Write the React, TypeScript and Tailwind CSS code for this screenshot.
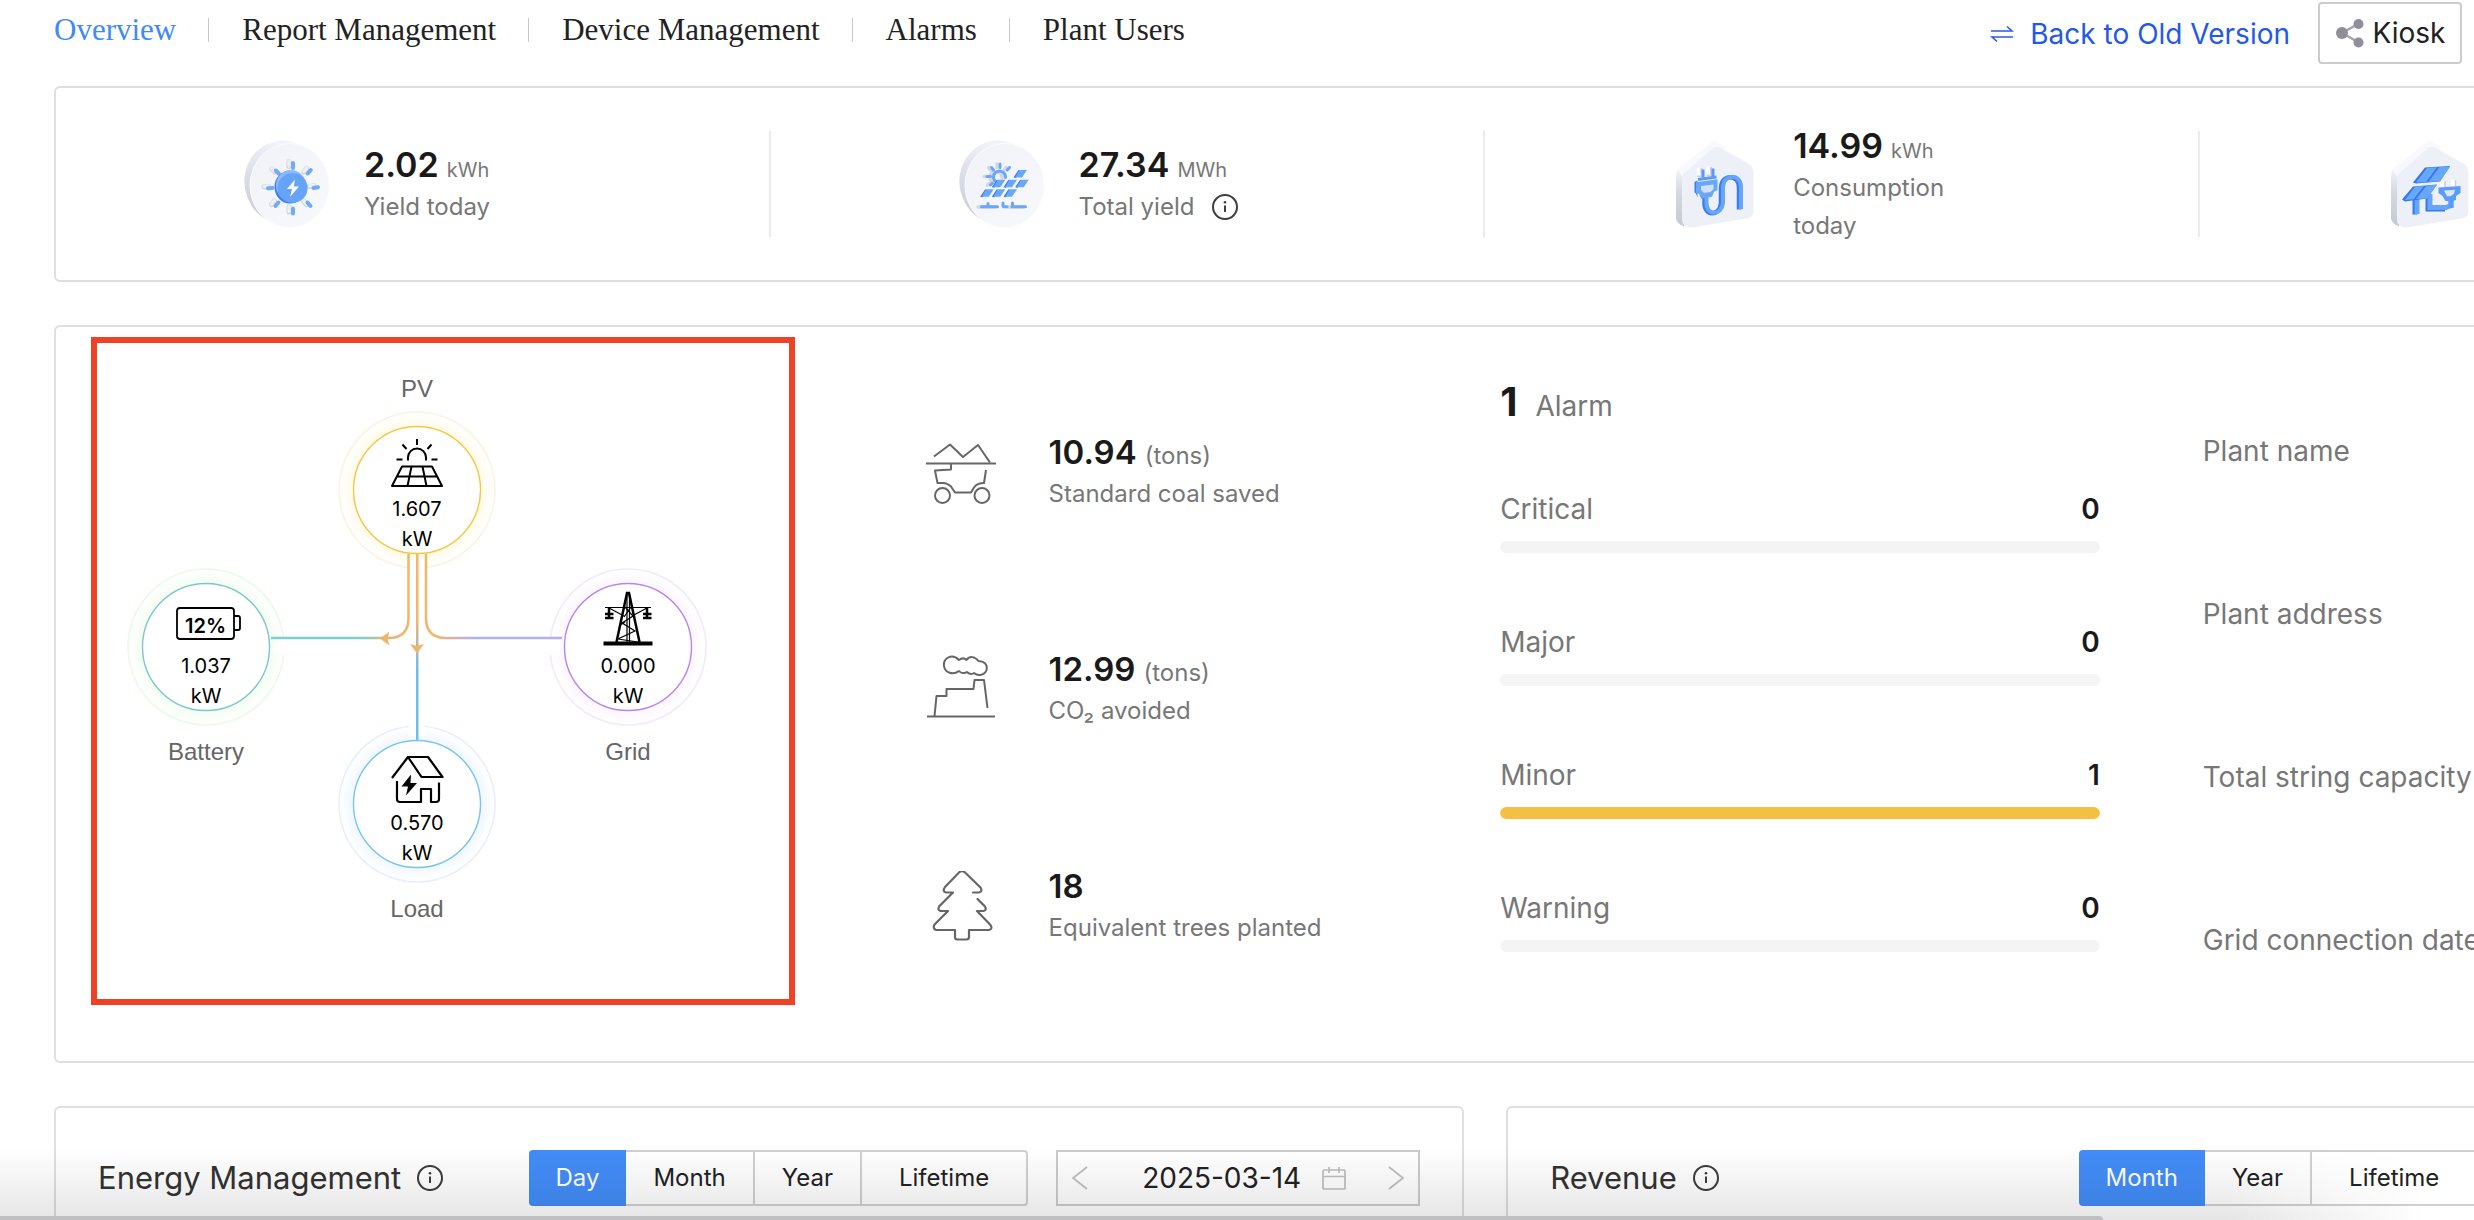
import type { ReactNode } from "react";

/* ---------- small line icons ---------- */

function InfoIcon() {
  return (
    <svg viewBox="0 0 26 26" className="h-[26px] w-[26px] shrink-0" fill="none" stroke="#3d3d3d" strokeWidth="2" aria-hidden="true">
      <circle cx="13" cy="13" r="12" />
      <path d="M13 11.5V18" />
      <circle cx="13" cy="8.2" r="1.3" fill="#3d3d3d" stroke="none" />
    </svg>
  );
}

function SwapIcon() {
  return (
    <svg viewBox="0 0 24 18" className="h-[18px] w-6" fill="none" stroke="#2a5bea" strokeWidth="1.6" aria-hidden="true">
      <path d="M1 6h21l-5-4.5" />
      <path d="M23 12H2l5 4.5" />
    </svg>
  );
}

function ShareIcon() {
  return (
    <svg viewBox="0 0 30 30" className="h-[30px] w-[30px]" fill="#8f8f99" stroke="#a3a3ab" aria-hidden="true">
      <path d="M7 15 23 6M7 15l16 9" fill="none" strokeWidth="2.5" />
      <g stroke="none">
        <circle cx="7" cy="15" r="6" />
        <circle cx="23.500" cy="6" r="5" />
        <circle cx="23.500" cy="24.500" r="5" />
      </g>
    </svg>
  );
}

function CalendarIcon() {
  return (
    <svg viewBox="0 0 24 24" className="h-6 w-6" fill="none" stroke="#bfbfbf" strokeWidth="1.7" aria-hidden="true">
      <rect x="1" y="4" width="22" height="19" rx="1" />
      <path d="M1 10.500h22M7 1v6M17 1v6" />
    </svg>
  );
}

function Chevron({ left }: { left?: boolean }) {
  return (
    <svg viewBox="0 0 16 24" className="h-6 w-4" fill="none" stroke="#bfbfbf" strokeWidth="1.8" aria-hidden="true">
      <path d={left ? "M15 1 1 12l14 11" : "M1 1l14 11L1 23"} />
    </svg>
  );
}

/* ---------- statistic badges ---------- */

function DiscBase({ id, children }: { id: string; children: ReactNode }) {
  return (
    <svg viewBox="0 0 86 90" className="h-[90px] w-[86px] shrink-0" aria-hidden="true">
      <defs>
        <linearGradient id={`${id}e`} x1="0.5" y1="0" x2="0" y2="0.8">
          <stop offset="0" stopColor="#f1f3fa" />
          <stop offset="0.55" stopColor="#d9dde6" />
          <stop offset="1" stopColor="#c9ced6" />
        </linearGradient>
        <linearGradient id={`${id}f`} x1="0" y1="0" x2="1" y2="1">
          <stop offset="0" stopColor="#f0f2f7" />
          <stop offset="1" stopColor="#f7f9fd" />
        </linearGradient>
      </defs>
      <ellipse cx="39.500" cy="43.500" rx="39" ry="42" transform="rotate(-12 39.500 43.500)" fill={`url(#${id}e)`} />
      <ellipse cx="45.500" cy="46.500" rx="39.500" ry="42" fill={`url(#${id}f)`} stroke="#fbfcfe" strokeWidth="1" />
      <g transform="translate(0 1)">{children}</g>
    </svg>
  );
}

function YieldBadge() {
  const rays = "M49 23v5M66.800 30l-3 3.500M69.500 48l4.500-.8M63.500 62.500l3 3.500M49 68.500v5M34.500 62.500l-3 3.500M28.500 48l-4.500.3M34.800 33.500l-3-3";
  return (
    <DiscBase id="yd">
      <path d={rays} transform="translate(-4 -1.500)" stroke="#cfd2d7" strokeWidth="5" strokeLinecap="round" fill="none" />
      <path d={rays} transform="translate(-4 -2)" stroke="#eceef1" strokeWidth="3.500" strokeLinecap="round" fill="none" />
      <path d={rays} stroke="#6faafb" strokeWidth="4" strokeLinecap="round" fill="none" />
      <ellipse cx="46" cy="47" rx="15.500" ry="16.500" fill="#3c7ff3" />
      <ellipse cx="47" cy="45.500" rx="15" ry="15.500" fill="#8fbafa" />
      <circle cx="48.600" cy="48" r="15" fill="#66a3fa" />
      <path d="M51 39.500 43 49h5l-2 8 9-10.500h-5.200z" fill="#fff" />
    </DiscBase>
  );
}

function Panel({ x, y }: { x: number; y: number }) {
  return (
    <g transform={`translate(${x} ${y})`}>
      <path d="M-6.500 3.500-1.500-4l2 1-4.500 7z" fill="#3479ec" />
      <path d="M-5 3.500-.5-4h7.500l-5 7.500z" fill="#69a7fb" />
    </g>
  );
}

function TotalBadge() {
  const cells = [[61, 34], [39.3, 43.7], [51, 43.7], [62.7, 43.7], [27.7, 53.2], [39.3, 53.2], [51, 53.2]];
  const rays = "M41 24v3.500M50.500 27.500l-2.200 2.500M32.500 27.500l2 2.500M28 36.500h3.500M31.500 45l2-1.800";
  return (
    <DiscBase id="ty">
      <g transform="translate(-3 0)" stroke="#d3d7de" strokeWidth="3.500" strokeLinecap="round" fill="none">
        <path d={rays} />
        <path d="M36 42a6 6 0 1 1 10-4M22 67h17M52 67h15" />
      </g>
      <g stroke="#6aa7fb" strokeWidth="3" strokeLinecap="round" fill="none">
        <path d={rays} />
        <path d="M36 41a6 6 0 1 1 10.500-3.500" />
        <path d="M22.500 66.700h16M44.500 66.700h3.500M53 66.700h13.500M29 63.500v3M44 63v3M53.500 63v3" />
      </g>
      {cells.map(([x, y]) => (
        <Panel key={`${x}-${y}`} x={x} y={y} />
      ))}
    </DiscBase>
  );
}

function HouseBase({ id, children }: { id: string; children: ReactNode }) {
  return (
    <svg viewBox="0 0 86 90" className="h-[90px] w-[86px] shrink-0" aria-hidden="true">
      <defs>
        <linearGradient id={id} x1="0" y1="0" x2="0" y2="1">
          <stop offset="0" stopColor="#f3f5fa" />
          <stop offset="0.4" stopColor="#d5dae0" />
          <stop offset="1" stopColor="#c3cad1" />
        </linearGradient>
      </defs>
      <g transform="translate(1 1)">
        <path d="M2 35q0-4 3-6.500l5 3v55Q2 83 2 78z" fill={`url(#${id})`} />
        <path d="M4 29.500 36 3q4-3 8-.5L52 8 10 40z" fill="#f7f9fe" />
        <path d="M8 39q0-4 3-6.500L38 9q4-4 9-1l28 16q4.500 3 4.500 8v39q0 6-5 7l-56 9.500Q8 88 8 79z" fill="#edf1f7" />
        {children}
      </g>
    </svg>
  );
}

function PlugHouse() {
  const cable = "M32.500 57v6c0 13 15 13 16.500 0V47c1-14 18-13.500 18 0v22";
  return (
    <HouseBase id="ph">
      <path d="M26 28v9M35.500 27v9" stroke="#cfd3d8" strokeWidth="5" fill="none" />
      <path d="M24.500 27.500v8M34 26.500v8" stroke="#f8f9fb" strokeWidth="4" fill="none" />
      <path d={cable} transform="translate(-2 .5)" fill="none" stroke="#3a7df2" strokeWidth="4.500" />
      <path d={cable} fill="none" stroke="#66a5fb" strokeWidth="4" />
      <path d="M29 29.500v8M39 28.500v8" stroke="#5b9af8" strokeWidth="3" />
      <path d="M24 39.500 42.500 37" stroke="#5b9af8" strokeWidth="3" />
      <path d="m20.500 42 3-1.500v17l-1.500-4-1.500-1z" fill="#3a7df2" />
      <path d="m22 42.300 21.500-3v11l-3.500 1.500-2 5-11 2-2-5-3-.8z" fill="#69a7fb" />
      <path d="m27 46 12.500-1.500v4.500L36.500 52l-6.500 1-3-3z" fill="#cfe1fb" />
    </HouseBase>
  );
}

function SolarHouse() {
  return (
    <HouseBase id="sh">
      <path d="M53.500 40.500v8M64 39.500v8" stroke="#fbfcfd" strokeWidth="5" />
      <path d="M56 41v6M66.500 40v6" stroke="#ccd0d6" strokeWidth="1.500" />
      <path d="M26 58v16.500M39 54v15h17" fill="none" stroke="#3478ee" strokeWidth="5" />
      <path d="M28 58v16M41 54v13.500h16l5-2V60" fill="none" stroke="#66a5fb" strokeWidth="5" />
      <path d="m24 42.500 12-15 25-1.500-10 15.500-24 2z" fill="#3478ee" />
      <path d="m27 42.500 11-14.500 10-.8-11 15zM39.500 42l11-15h10.500L51 41z" fill="#69a7fb" />
      <path d="m13 59.500 11-13 24-2-10 14-22 3z" fill="#3478ee" />
      <path d="m16 60 10-13.300 9-.8-10.500 13.300zM27 59l10.500-13.300 10.500-.9-10 13.700z" fill="#69a7fb" />
      <path d="m49.500 47.500 22-1.500v7L67 56v4l-2.500.8V68h-5v-7h-3l-3-5-4-3z" fill="#5b9bf9" />
      <path d="m55 50.500 11-.8-1 4-3.500 2.500h-3.500z" fill="#d9e8fd" />
    </HouseBase>
  );
}

/* ---------- environmental benefit icons ---------- */

function CartIcon() {
  return (
    <svg viewBox="0 0 72 72" className="h-[72px] w-[72px] shrink-0" fill="none" stroke="#666" strokeWidth="2" strokeLinejoin="round" aria-hidden="true">
      <path d="M9 19.500 25 7.500 38 20 53 8l12 17.500" />
      <path d="M1 26.500h70" />
      <path d="M26 26.500v6l-16 1 2.500 12.500h5q5 0 8.500 3.500l4 6h16l3-5q3-4.500 10-4.500L61 33" />
      <circle cx="17.500" cy="58.500" r="7.500" />
      <circle cx="57" cy="58.500" r="7.500" />
    </svg>
  );
}

function FactoryIcon() {
  return (
    <svg viewBox="0 0 72 72" className="h-[72px] w-[72px] shrink-0" fill="none" stroke="#666" strokeWidth="2" strokeLinejoin="round" aria-hidden="true">
      <path d="M2 62.500h68M9.500 62l2-20h10v-7h27l1-9h9.500L62.500 54" />
      <path d="M34 6c-7-7-16-2-15 6 1 7 9 9.500 15 5 2 2.500 6 2.500 8 1 2 2 5 2.500 7 1 4 3.500 11 2 12.500-3 1.500-6-3-9-8-9-4-5-9-5-12-1-2-2-5-2-7.500 0z" />
    </svg>
  );
}

function TreeIcon() {
  return (
    <svg viewBox="0 0 72 72" className="h-[72px] w-[72px] shrink-0" fill="none" stroke="#666" strokeWidth="2.2" strokeLinejoin="round" strokeLinecap="round" aria-hidden="true">
      <path d="M48 21.500h6q4-1 1.500-5L40 1.500q-3-3-6 0L20 16q-3 4.500 1 5.500h7L14.500 35q-2.500 4 1 5h7.500L9.500 53.500q-2 4 1.500 5.500h19v7q0 2.500 2.500 2.500h9q2.500 0 2.500-2.500v-7h20q4-1 1.500-5L52 40h6.500q4-1 1-5l-7-7" />
    </svg>
  );
}

/* ---------- power flow icons ---------- */

function PvGlyph() {
  return (
    <svg viewBox="0 0 56 56" className="h-14 w-14" fill="none" stroke="#000" strokeWidth="2" aria-hidden="true">
      <path d="M28 1v6M13.500 6.500 17.500 11M42.500 6.500 38.500 11M7.500 21.500h6M42.500 21.500h6M19 22.500v-3a9 9 0 0 1 18 0v3" />
      <path d="M13 28.500h30L53 48H3zM8.500 38.500h39M22.500 28.500 18.500 48M33.500 28.500 37.500 48" strokeLinejoin="round" />
    </svg>
  );
}

function BatteryGlyph() {
  return (
    <svg viewBox="0 0 72 56" className="h-14 w-[72px]" fill="none" stroke="#000" strokeWidth="1.8" role="img" aria-label="Battery charge 12%">
      <rect x="7" y="13" width="57" height="31" rx="3" />
      <path d="M64 21h4q2 0 2 2v10q0 2-2 2h-4" />
      <text x="35.500" y="38" textAnchor="middle" stroke="none" fill="#000" fontFamily="Inter, sans-serif" fontSize="20" fontWeight="600">
        12%
      </text>
    </svg>
  );
}

function TowerGlyph() {
  return (
    <svg viewBox="0 0 56 56" className="h-14 w-14 overflow-visible" fill="none" stroke="#000" aria-hidden="true">
      <path d="M3.500 48.500h49" strokeWidth="4" />
      <path d="M16.500 47 27-2h2l10.500 49" strokeWidth="2.500" />
      <path d="M27 0v47M29.500 0v47" strokeWidth="1.200" />
      <path d="M5 12.500h46M9 13l15 8M47 13 32 21M25 12l8 9-11 7 13 8-17 8 20 3M31 12l-7 10M20 30l5-3" strokeWidth="1.200" />
      <path d="M9 13v11M47 13v11" strokeWidth="2.500" />
      <path d="M5 19h8.500M5 23h8.500M43 19h8.500M43 23h8.500" strokeWidth="2.500" />
    </svg>
  );
}

function HomeGlyph() {
  return (
    <svg viewBox="0 0 56 56" className="h-14 w-14" fill="none" stroke="#000" strokeWidth="2.2" strokeLinejoin="round" aria-hidden="true">
      <path d="M3 26 19 5h20l14.500 20H32.500L19 5" />
      <path d="M8 29v18q0 3 3 3h21V37h10v13h5q3 0 3-3V30.500" />
      <path d="M22 22.500 12.500 34.500h6.500l-2 9 11-12.500h-6.500z" fill="#000" stroke="none" />
    </svg>
  );
}

/* ---------- power flow ---------- */

const rings = [
  { id: "pv", cx: 417, cy: 490, line: "#f5c842", outer: "#fdf2df", glow: "#fffae6" },
  { id: "bat", cx: 206, cy: 647, line: "#7fc5cf", outer: "#e8fbe4", glow: "#f1fdee" },
  { id: "grid", cx: 628, cy: 647, line: "#b983f5", outer: "#f2e9fd", glow: "#faf5ff" },
  { id: "load", cx: 417, cy: 804, line: "#78c4f0", outer: "#e6f0fd", glow: "#eef6ff" },
];

function FlowLines() {
  return (
    <svg viewBox="97 343 692 656" className="absolute left-0 top-0 h-[656px] w-[692px]" fill="none" aria-hidden="true">
      <defs>
        {rings.map((r) => (
          <radialGradient key={r.id} id={`glow-${r.id}`} gradientUnits="userSpaceOnUse" cx={r.cx} cy={r.cy} r="78">
            <stop offset="0.8" stopColor={r.glow} />
            <stop offset="0.98" stopColor="#fff" />
          </radialGradient>
        ))}
        <linearGradient id="toBattery" gradientUnits="userSpaceOnUse" x1="409" y1="0" x2="360" y2="0">
          <stop offset="0.2" stopColor="#f2b56b" />
          <stop offset="1" stopColor="#7fcfcb" />
        </linearGradient>
        <linearGradient id="toGrid" gradientUnits="userSpaceOnUse" x1="426" y1="0" x2="475" y2="0">
          <stop offset="0.2" stopColor="#f2b56b" />
          <stop offset="1" stopColor="#b4aef5" />
        </linearGradient>
        <linearGradient id="toLoad" gradientUnits="userSpaceOnUse" x1="0" y1="554" x2="0" y2="700">
          <stop offset="0.45" stopColor="#f2b56b" />
          <stop offset="0.8" stopColor="#6cbdf0" />
        </linearGradient>
      </defs>
      {rings.map((r) => (
        <g key={r.id}>
          <circle cx={r.cx} cy={r.cy} r="78" fill={`url(#glow-${r.id})`} stroke={r.outer} strokeWidth="1.600" />
          <circle cx={r.cx} cy={r.cy} r="63.500" fill="#fff" stroke={r.line} strokeWidth="1.400" />
        </g>
      ))}
      <path d="M409 560h16v12h-16zM409 722h16v14h-16zM274 639h16v16h-16zM544 639h16v16h-16z" fill="#fff" />
      <path d="M408.500 554v64q0 20-20 20H271" stroke="url(#toBattery)" strokeWidth="2.500" />
      <path d="M426 554v64q0 20 20 20h116" stroke="url(#toGrid)" strokeWidth="2.500" />
      <path d="M416 554h2.500v186H416z" fill="url(#toLoad)" />
      <path d="M380 638.500l9.500-7-2 7 2 7zM417 653.500l-7-9.500 7 2 7-2z" fill="#f4b268" />
    </svg>
  );
}

type NodeProps = { place: string; label: string; value: string; labelFirst?: boolean; children: ReactNode };

function FlowNode({ place, label, value, labelFirst, children }: NodeProps) {
  const caption = <p className="text-center font-['Liberation_Sans',Arial,sans-serif] text-2xl leading-[30px] text-[#666]">{label}</p>;
  return (
    <div className={`absolute w-[156px] ${place}`}>
      {labelFirst && <div className="mb-2">{caption}</div>}
      <div className="flex h-[156px] flex-col items-center pt-[26px] text-xl leading-[30px] text-black">
        {children}
        <span>{value}</span>
        <span>kW</span>
      </div>
      {!labelFirst && <div className="mt-3">{caption}</div>}
    </div>
  );
}

function PowerFlow() {
  return (
    <section aria-label="Power flow" className="relative ml-[35px] mt-[10px] h-[668px] w-[704px] border-6 border-[#ef4126]">
      <FlowLines />
      <FlowNode place="left-[242px] top-[31px]" label="PV" value="1.607" labelFirst>
        <PvGlyph />
      </FlowNode>
      <FlowNode place="left-[31px] top-[226px]" label="Battery" value="1.037">
        <BatteryGlyph />
      </FlowNode>
      <FlowNode place="left-[453px] top-[226px]" label="Grid" value="0.000">
        <TowerGlyph />
      </FlowNode>
      <FlowNode place="left-[242px] top-[383px]" label="Load" value="0.570">
        <HomeGlyph />
      </FlowNode>
    </section>
  );
}

/* ---------- page sections ---------- */

const tabs = ["Overview", "Report Management", "Device Management", "Alarms", "Plant Users"];

function Header() {
  return (
    <header className="flex h-[86px] items-start justify-between pl-[54px] pr-3">
      <nav className="mt-[18px] flex items-center divide-x divide-[#c8c8c8] font-['Liberation_Serif','Times_New_Roman',serif] text-[31px] leading-6">
        {tabs.map((tab, i) => (
          <a key={tab} href="#" className={i === 0 ? "pr-8 text-[#3f8af7]" : "pl-[33px] pr-8 text-[#222]"}>
            {tab}
          </a>
        ))}
      </nav>
      <div className="flex items-center gap-7 pt-[2px] text-[28px]">
        <a href="#" className="flex items-center gap-4 pt-[2px] text-[#2458ea]">
          <SwapIcon />
          Back to Old Version
        </a>
        <button type="button" className="flex h-[62px] w-36 items-center justify-center gap-2 rounded-sm border-2 border-[#ccc] text-[#222]">
          <ShareIcon />
          Kiosk
        </button>
      </div>
    </header>
  );
}

type StatProps = { icon: ReactNode; value?: string; unit?: string; label?: string; info?: boolean };

function Stat({ icon, value, unit, label, info }: StatProps) {
  return (
    <div className="flex h-[106px] items-center gap-[34px] border-r-2 border-[#ebebeb] pl-[188px] last:border-r-0">
      {icon}
      {value && (
        <div className="max-w-[170px]">
          <p className="flex items-baseline gap-2 whitespace-nowrap leading-[46px]">
            <span className="text-[34px] font-semibold text-[#1a1a1a]">{value}</span>
            <span className="text-xl leading-none text-[#777]">{unit}</span>
          </p>
          <p className="flex items-center gap-[18px] text-2xl leading-[38px] text-[#777]">
            {label}
            {info && <InfoIcon />}
          </p>
        </div>
      )}
    </div>
  );
}

function Benefit({ icon, value, unit, label }: { icon: ReactNode; value: string; unit?: string; label: ReactNode }) {
  return (
    <li className="flex items-center gap-[52px]">
      {icon}
      <div className="whitespace-nowrap">
        <p className="flex items-baseline gap-2 leading-[42px]">
          <span className="text-[33px] font-semibold text-[#1a1a1a]">{value}</span>
          {unit && <span className="text-2xl leading-none text-[#777]">{unit}</span>}
        </p>
        <p className="text-2xl leading-[42px] text-[#777]">{label}</p>
      </div>
    </li>
  );
}

const alarms = [
  { name: "Critical", count: 0 },
  { name: "Major", count: 0 },
  { name: "Minor", count: 1 },
  { name: "Warning", count: 0 },
];

function AlarmPanel() {
  return (
    <section className="pl-[15px] pr-[100px] pt-[50px]">
      <h2 className="flex items-baseline gap-[18px] leading-[50px]">
        <span className="text-[40px] font-bold text-[#1a1a1a]">1</span>
        <span className="text-[28px] leading-none text-[#777]">Alarm</span>
      </h2>
      <ul className="mt-16 flex flex-col gap-[71px]">
        {alarms.map((a) => (
          <li key={a.name}>
            <div className="flex justify-between text-[28px] leading-9">
              <span className="text-[#777]">{a.name}</span>
              <span className="font-semibold text-[#1a1a1a]">{a.count}</span>
            </div>
            <div className="mt-[14px] h-3 overflow-hidden rounded-full bg-[#f4f4f4]">
              <div className="h-full rounded-full bg-[#f3c041]" style={{ width: `${a.count * 100}%` }} />
            </div>
          </li>
        ))}
      </ul>
    </section>
  );
}

function PeriodPicker({ options }: { options: string[] }) {
  return (
    <div className="flex h-14 text-2xl text-[#222]">
      {options.map((o, i) => (
        <button
          key={o}
          type="button"
          aria-pressed={i === 0}
          className={
            i === 0
              ? "rounded-l bg-[#438df8] px-[27px] text-white"
              : o === "Lifetime"
                ? "rounded-r border-y-2 border-r-2 border-[#d0d0d0] px-[37px]"
                : "border-y-2 border-r-2 border-[#d0d0d0] px-[27px]"
          }
        >
          {o}
        </button>
      ))}
    </div>
  );
}

function CardTitle({ children }: { children: ReactNode }) {
  return (
    <h2 className="flex items-center gap-4 whitespace-nowrap text-[31px] text-[#333]">
      {children}
      <InfoIcon />
    </h2>
  );
}

const plantFields = ["Plant name", "Plant address", "Total string capacity", "Grid connection date"];

export default function App() {
  return (
    <div className="relative h-screen overflow-hidden bg-white font-[Inter,sans-serif]">
      <Header />
      <main className="flex w-[118%] flex-col gap-[43px] pl-[54px] pr-[3px]">
        <section className="grid grid-cols-4 rounded-md border-2 border-[#dfdfdf] py-[43px]">
          <Stat icon={<YieldBadge />} value="2.02" unit="kWh" label="Yield today" />
          <Stat icon={<TotalBadge />} value="27.34" unit="MWh" label="Total yield" info />
          <Stat icon={<PlugHouse />} value="14.99" unit="kWh" label="Consumption today" />
          <Stat icon={<SolarHouse />} />
        </section>

        <section className="grid grid-cols-4 rounded-md border-2 border-[#dfdfdf] pb-14">
          <PowerFlow />
          <ul className="flex flex-col gap-[133px] pl-[154px] pt-[104px]">
            <Benefit icon={<CartIcon />} value="10.94" unit="(tons)" label="Standard coal saved" />
            <Benefit icon={<FactoryIcon />} value="12.99" unit="(tons)" label="CO₂ avoided" />
            <Benefit icon={<TreeIcon />} value="18" label="Equivalent trees planted" />
          </ul>
          <AlarmPanel />
          <ul className="flex flex-col gap-[127px] whitespace-nowrap pl-[3px] pt-[106px] text-[28px] leading-9 text-[#777]">
            {plantFields.map((f) => (
              <li key={f}>{f}</li>
            ))}
          </ul>
        </section>

        <div className="grid grid-cols-2 gap-[42px]">
          <section className="flex h-80 items-start justify-between rounded-md border-2 border-[#dfdfdf] pl-[42px] pr-[42px] pt-[42px]">
            <div className="flex h-14 items-center">
              <CardTitle>Energy Management</CardTitle>
            </div>
            <div className="flex gap-7">
              <PeriodPicker options={["Day", "Month", "Year", "Lifetime"]} />
              <div className="flex h-14 w-[364px] items-center justify-between border-2 border-[#ccc] px-[14px]">
                <button type="button" aria-label="Previous day">
                  <Chevron left />
                </button>
                <label className="ml-3 flex items-center gap-4">
                  <input aria-label="Date" defaultValue="2025-03-14" className="w-[164px] bg-transparent text-[28px] text-[#222] outline-none" />
                  <CalendarIcon />
                </label>
                <button type="button" aria-label="Next day">
                  <Chevron />
                </button>
              </div>
            </div>
          </section>
          <section className="flex h-80 items-start justify-between rounded-md border-2 border-[#dfdfdf] pl-[42px] pr-[436px] pt-[42px]">
            <div className="flex h-14 items-center">
              <CardTitle>Revenue</CardTitle>
            </div>
            <PeriodPicker options={["Month", "Year", "Lifetime"]} />
          </section>
        </div>
      </main>

      <div className="pointer-events-none absolute inset-x-0 bottom-0 h-[72px] bg-linear-to-b from-transparent to-black/10 mask-r-from-90% mask-r-to-98%" />
      <div className="absolute bottom-0 left-0 h-1 w-[85%] rounded-tr bg-[#c0c0c2]" />
    </div>
  );
}
